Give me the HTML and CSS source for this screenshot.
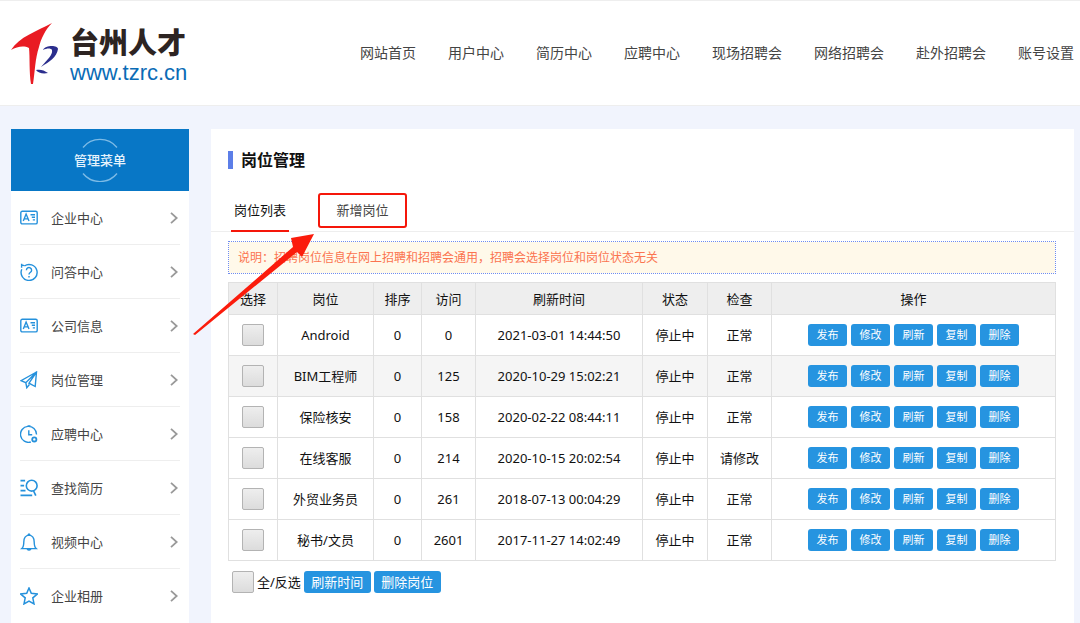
FILE: index.html
```html
<!DOCTYPE html>
<html lang="zh-CN">
<head>
<meta charset="utf-8">
<title>岗位管理 - 台州人才</title>
<link rel="stylesheet" href="styles.css">
</head>
<body>
<svg class="defs" aria-hidden="true">
  <symbol id="i-card" viewBox="0 0 18 18"><rect x="0.8" y="2.3" width="16.4" height="12.6" rx="1.5"/><path d="M3.3 12 6.1 5.1 9 12M4.2 9.900h3.900M10.500 5.700H15M11.800 8.300H15M12.800 10.900H15"/></symbol>
  <symbol id="i-help" viewBox="0 0 18 18"><path d="M1.600.8v4M1.600 1.800l2.600.8M4.400 3A8 8 0 1 1 1.800 6.200M6.400 7.200a2.600 2.600 0 1 1 4.100 2.100c-1 .7-1.500 1.100-1.500 2.100M9 13.100v1.400"/></symbol>
  <symbol id="i-plane" viewBox="0 0 18 18"><path d="M16.500 1 1 9.700l4.800 2L16.500 1 9 12.200l6.200 3.300zM5.800 11.700l1 5 2.600-3.200"/></symbol>
  <symbol id="i-clock" viewBox="0 0 18 18"><path d="M10.800 17A8 8 0 1 1 16.500 9.500M7.500 1h3M8.800 5.200v4.600h3.400"/><circle cx="14.3" cy="14.4" r="2.1" stroke-width="1.8"/></symbol>
  <symbol id="i-search" viewBox="0 0 18 18"><path d="M.5 1.600h4.600M.5 6.600h3.600M.5 11.600h5M.5 16.400h11.700M13.600 12l2.200 4.600" stroke-width="1.700"/><circle cx="11.700" cy="6.700" r="5.400" stroke-width="1.600"/></symbol>
  <symbol id="i-bell" viewBox="0 0 18 18"><path d="M1.800 15.600c1.600-1.300 2-2.500 2-6.600 0-4.200 1.600-6.600 5.200-6.900 3.600.3 5.200 2.700 5.200 6.900 0 4.100.4 5.300 2 6.600zM7.900 2.100Q9-.2 10.100 2.100M7 15.700q2 2.600 4 0"/></symbol>
  <symbol id="i-star" viewBox="0 0 18 18"><path d="m9 1 2.300 5.300 6 .7-4.500 3.900 1.200 6L9 14l-5 2.900 1.200-6L.7 7l6-.7z" stroke-width="1.500"/></symbol>
  <symbol id="i-arrow" viewBox="0 0 8 12"><path d="m1 .8 5.700 5.200L1 11.200"/></symbol>
</svg>

<header class="header">
  <a class="logo" href="#">
    <svg class="logo-mark" viewBox="0 0 48 62" aria-hidden="true">
      <path fill="#e91b23" d="M0 27C8 14 26 8 41 0 34 7 30 16 28 24 24 36 24 49 22 61H20C18 49 19 34 18 25 12 22 6 24 0 27Z"/>
      <path fill="#2b2e8d" d="M32 27C34 22 47 22 47 26 46 34 38 39 30 44 36 37 42 32 41 27 40 25 36 25 32 27ZM25 47C29 46 33 47 37 50 32 51 27 50 25 47Z"/>
    </svg>
    <span class="logo-text"><strong class="logo-name">台州人才</strong><span class="logo-url">www.tzrc.cn</span></span>
  </a>
  <nav class="nav">
    <a href="#">网站首页</a><a href="#">用户中心</a><a href="#">简历中心</a><a href="#">应聘中心</a><a href="#">现场招聘会</a><a href="#">网络招聘会</a><a href="#">赴外招聘会</a><a href="#">账号设置</a>
  </nav>
</header>

<div class="page">
  <aside class="sidebar">
    <h2 class="menu-head">
      <svg class="menu-ring" viewBox="0 0 36 44" aria-hidden="true"><path d="M1 9.500A22 22 0 0 1 35 9.500M1 35.500A22 22 0 0 0 35 35.500"/></svg>
      <span>管理菜单</span>
    </h2>
    <nav class="menu">
      <a class="menu-item" href="#"><svg class="icon"><use href="#i-card"/></svg><span>企业中心</span><svg class="chev"><use href="#i-arrow"/></svg></a>
      <a class="menu-item" href="#"><svg class="icon"><use href="#i-help"/></svg><span>问答中心</span><svg class="chev"><use href="#i-arrow"/></svg></a>
      <a class="menu-item" href="#"><svg class="icon"><use href="#i-card"/></svg><span>公司信息</span><svg class="chev"><use href="#i-arrow"/></svg></a>
      <a class="menu-item" href="#"><svg class="icon"><use href="#i-plane"/></svg><span>岗位管理</span><svg class="chev"><use href="#i-arrow"/></svg></a>
      <a class="menu-item" href="#"><svg class="icon"><use href="#i-clock"/></svg><span>应聘中心</span><svg class="chev"><use href="#i-arrow"/></svg></a>
      <a class="menu-item" href="#"><svg class="icon"><use href="#i-search"/></svg><span>查找简历</span><svg class="chev"><use href="#i-arrow"/></svg></a>
      <a class="menu-item" href="#"><svg class="icon"><use href="#i-bell"/></svg><span>视频中心</span><svg class="chev"><use href="#i-arrow"/></svg></a>
      <a class="menu-item" href="#"><svg class="icon"><use href="#i-star"/></svg><span>企业相册</span><svg class="chev"><use href="#i-arrow"/></svg></a>
    </nav>
  </aside>

  <main class="main">
    <h1 class="title">岗位管理</h1>
    <div class="tabs">
      <a class="tab tab-active" href="#">岗位列表</a>
      <a class="tab tab-new" href="#">新增岗位
        <svg class="pointer" viewBox="0 0 122 103" aria-hidden="true"><path d="M0 101 100 14 98 5 121 1 109 24 104 19 2 102Z"/></svg>
      </a>
    </div>
    <div class="content">
      <p class="note">说明：招聘岗位信息在网上招聘和招聘会通用，招聘会选择岗位和岗位状态无关</p>
      <table class="jobs">
        <colgroup><col class="c-pick"><col class="c-name"><col class="c-order"><col class="c-visit"><col class="c-time"><col class="c-state"><col class="c-check"><col></colgroup>
        <thead>
          <tr><th>选择</th><th>岗位</th><th>排序</th><th>访问</th><th>刷新时间</th><th>状态</th><th>检查</th><th>操作</th></tr>
        </thead>
        <tbody>
          <tr><td><input class="check" type="checkbox" aria-label="选择 Android"></td><td>Android</td><td>0</td><td>0</td><td>2021-03-01 14:44:50</td><td>停止中</td><td>正常</td><td><div class="ops"><button class="op">发布</button><button class="op">修改</button><button class="op">刷新</button><button class="op">复制</button><button class="op">删除</button></div></td></tr>
          <tr class="row-active"><td><input class="check" type="checkbox" aria-label="选择 BIM工程师"></td><td>BIM工程师</td><td>0</td><td>125</td><td>2020-10-29 15:02:21</td><td>停止中</td><td>正常</td><td><div class="ops"><button class="op">发布</button><button class="op">修改</button><button class="op">刷新</button><button class="op">复制</button><button class="op">删除</button></div></td></tr>
          <tr><td><input class="check" type="checkbox" aria-label="选择 保险核安"></td><td>保险核安</td><td>0</td><td>158</td><td>2020-02-22 08:44:11</td><td>停止中</td><td>正常</td><td><div class="ops"><button class="op">发布</button><button class="op">修改</button><button class="op">刷新</button><button class="op">复制</button><button class="op">删除</button></div></td></tr>
          <tr><td><input class="check" type="checkbox" aria-label="选择 在线客服"></td><td>在线客服</td><td>0</td><td>214</td><td>2020-10-15 20:02:54</td><td>停止中</td><td>请修改</td><td><div class="ops"><button class="op">发布</button><button class="op">修改</button><button class="op">刷新</button><button class="op">复制</button><button class="op">删除</button></div></td></tr>
          <tr><td><input class="check" type="checkbox" aria-label="选择 外贸业务员"></td><td>外贸业务员</td><td>0</td><td>261</td><td>2018-07-13 00:04:29</td><td>停止中</td><td>正常</td><td><div class="ops"><button class="op">发布</button><button class="op">修改</button><button class="op">刷新</button><button class="op">复制</button><button class="op">删除</button></div></td></tr>
          <tr><td><input class="check" type="checkbox" aria-label="选择 秘书/文员"></td><td>秘书/文员</td><td>0</td><td>2601</td><td>2017-11-27 14:02:49</td><td>停止中</td><td>正常</td><td><div class="ops"><button class="op">发布</button><button class="op">修改</button><button class="op">刷新</button><button class="op">复制</button><button class="op">删除</button></div></td></tr>
        </tbody>
      </table>
      <div class="bulk">
        <label class="all"><input class="check" type="checkbox">全/反选</label>
        <button class="op op-wide">刷新时间</button>
        <button class="op op-wide">删除岗位</button>
      </div>
    </div>
  </main>
</div>
</body>
</html>
```

FILE: styles.css
```css
* { box-sizing: border-box; }

body {
  margin: 0;
  min-height: 100vh;
  display: flex;
  flex-direction: column;
  background: #f1f4fd;
  color: #222;
  font: 13px/20px "Noto Sans", "Noto Sans CJK SC", sans-serif;
}

a { color: inherit; text-decoration: none; }
h1, h2, p { margin: 0; }
.defs { display: none; }

/* header */
.header {
  display: flex;
  justify-content: space-between;
  align-items: center;
  height: 106px;
  padding: 0 6px 0 11px;
  background: #fff;
  border-top: 1px solid #eee;
  border-bottom: 1px solid #eee;
}
.logo { display: flex; align-items: center; gap: 11px; padding-top: 2px; }
.logo-mark { width: 48px; height: 62px; }
.logo-text { display: flex; flex-direction: column; }
.logo-name {
  font-family: "Noto Sans CJK SC", sans-serif;
  font-size: 29px;
  line-height: 38px;
  font-weight: 900;
  color: #2d2422;
}
.logo-url {
  font-family: "Liberation Sans", sans-serif;
  font-size: 22px;
  line-height: 26px;
  color: #0a6cb6;
}
.nav { display: flex; gap: 32px; font-size: 14px; color: #444; white-space: nowrap; }

/* page columns */
.page {
  flex: 1;
  display: flex;
  gap: 22px;
  padding: 23px 6px 0 11px;
}
.sidebar { flex: none; width: 178px; background: #fff; }
.menu-head {
  position: relative;
  display: flex;
  align-items: center;
  justify-content: center;
  height: 62px;
  background: #0877c6;
  color: #e6f3fc;
  font-size: 13px;
  font-weight: 500;
}
.menu-ring {
  position: absolute;
  inset: 9px auto auto 71px;
  width: 36px;
  height: 44px;
  fill: none;
  stroke: #7dbbe6;
  stroke-width: 1.3;
}
.menu { padding: 0 9px; }
.menu-item {
  display: flex;
  align-items: center;
  height: 54px;
  color: #444;
  border-bottom: 1px solid #eee;
}
.menu-item:last-child { border-bottom: 0; }
.menu-item span { flex: 1; padding-left: 13px; }
.icon { width: 18px; height: 18px; fill: none; stroke: #2591dc; stroke-width: 1.4; }
.chev { width: 8px; height: 12px; margin-right: 2px; fill: none; stroke: #999; stroke-width: 1.8; }

/* main panel */
.main { flex: 1; min-width: 0; background: #fff; }
.title {
  margin: 22px 18px 0 17px;
  padding-left: 8px;
  border-left: 5px solid #5c7ee8;
  font-size: 16px;
  line-height: 18px;
  font-weight: 700;
  color: #111;
}
.tabs {
  display: flex;
  gap: 29px;
  height: 63px;
  padding: 22px 20px 0 20px;
  border-bottom: 1px solid #eee;
}
.tab { display: flex; justify-content: center; position: relative; }
.tab-active {
  width: 58px;
  height: 41px;
  padding-top: 9px;
  color: #111;
  border-bottom: 2px solid #f5170a;
}
.tab-new {
  width: 89px;
  height: 35px;
  margin-top: 2px;
  padding-top: 5px;
  color: #444;
  border: 2px solid #f5170a;
  border-radius: 3px;
}
.pointer {
  position: absolute;
  z-index: 2;
  top: 38px;
  right: 90px;
  width: 122px;
  height: 103px;
  fill: #fb1c0c;
}
.content { padding: 9px 18px 20px 17px; }
.note {
  padding: 6px 9px 5px;
  border: 1px dotted #6f8cf0;
  background: #fff9ea;
  background-clip: padding-box;
  color: #fb7450;
  font-size: 12px;
}

/* table */
.jobs {
  width: 100%;
  margin-top: 8px;
  table-layout: fixed;
  border-collapse: collapse;
  color: #111;
  text-align: center;
}
.jobs th, .jobs td { padding: 0; border: 1px solid #e0e0e0; }
.jobs th { height: 32px; background: #eee; font-weight: 400; }
.jobs td { height: 41px; }
.jobs tbody tr:hover, .jobs .row-active { background: #f5f5f5; }
.c-pick { width: 49px; }
.c-name { width: 96px; }
.c-order { width: 48px; }
.c-visit { width: 54px; }
.c-time { width: 167px; }
.c-state { width: 65px; }
.c-check { width: 64px; }

.check {
  appearance: none;
  display: block;
  width: 22px;
  height: 22px;
  margin: 0 auto;
  border: 1px solid #b3b3b3;
  border-radius: 2px;
  background: linear-gradient(#eee, #dcdcdc);
}
.check:checked { background: #2694e0; }
.ops { display: flex; justify-content: center; gap: 4px; }
.op {
  width: 39px;
  height: 22px;
  padding: 0;
  border: 0;
  border-radius: 3px;
  background: #2694e0;
  color: #fff;
  font: 11px/20px "Noto Sans", "Noto Sans CJK SC", sans-serif;
}
.bulk { display: flex; align-items: center; gap: 3px; padding: 10px 4px 0; }
.all { display: flex; align-items: center; gap: 3px; color: #111; }
.op-wide { width: 67px; font-size: 13px; }
```
